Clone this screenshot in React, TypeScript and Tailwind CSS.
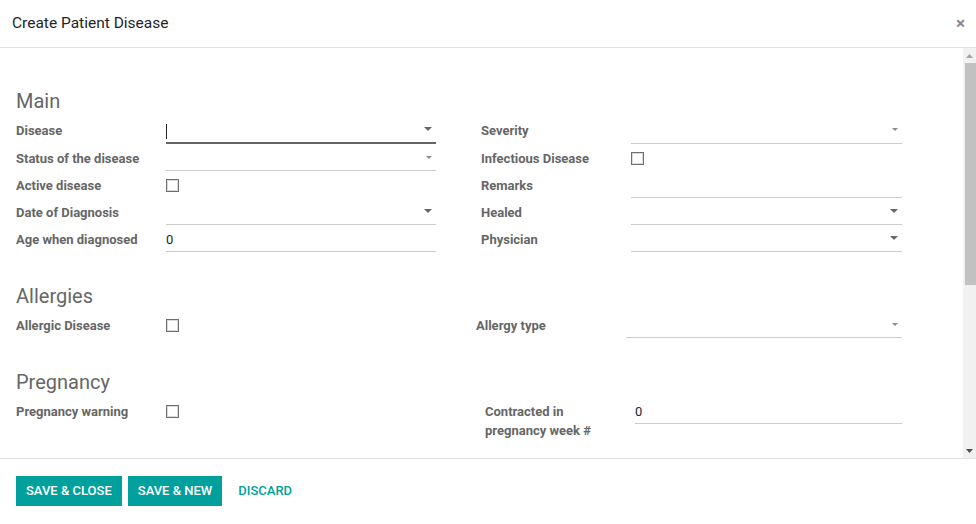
import type { FC, ReactNode } from "react";

const Caret: FC<{ big?: boolean }> = ({ big }) =>
  big ? (
    <svg width="8" height="4" viewBox="0 0 8 4" className="shrink-0">
      <path d="M0 0h8L4 4z" fill="#666666" />
    </svg>
  ) : (
    <svg width="6" height="3" viewBox="0 0 6 3" className="shrink-0">
      <path d="M0 0h6L3 3z" fill="#8a8a8a" />
    </svg>
  );

const Checkbox: FC = () => (
  <div className="h-[27px] flex items-center pt-[1px]">
    <span className="block w-[13px] h-[13px] border border-[#6f6f6f] bg-white shadow-[inset_0_0_0_1px_#d6dbe0]" />
  </div>
);

type FieldProps = {
  w: string;
  value?: string;
  caret?: "big" | "small";
  focused?: boolean;
  tall?: boolean;
};

const Field: FC<FieldProps> = ({ w, value, caret, focused, tall }) => (
  <div
    className={`${w} flex items-center justify-between pr-[4px] ${
      focused
        ? "h-[28px] border-b-2 border-[#666666]"
        : `${tall ? "h-[28px]" : "h-[27px]"} border-b border-[#cccccc]`
    }`}
  >
    <span className="text-[13px] text-[#212529] pt-[3px]">
      {focused ? <span className="inline-block w-px h-[15px] bg-[#222] align-middle" /> : value}
    </span>
    {caret && <Caret big={caret === "big"} />}
  </div>
);

const Row: FC<{ label: ReactNode; children: ReactNode }> = ({ label, children }) => (
  <div className="flex items-start">
    <div className="w-[150px] shrink-0 min-h-[27px] pt-[2px] flex items-center text-[13px] font-bold text-[#666666] leading-[19px]">
      {label}
    </div>
    {children}
  </div>
);

const Heading: FC<{ children: ReactNode; className?: string }> = ({ children, className }) => (
  <h2 className={`text-[20px] leading-[26px] text-[#666666] font-normal ${className ?? ""}`}>{children}</h2>
);

export default function App() {
  return (
    <div
      className="w-[976px] h-[524px] bg-white flex flex-col overflow-hidden"
      style={{ fontFamily: "Roboto, 'Liberation Sans', sans-serif" }}
    >
      {/* header */}
      <div className="h-[48px] shrink-0 border-b border-[#dee2e6] flex items-center justify-between pl-[12px] pr-[11px]">
        <h1 className="text-[15.5px] text-[#212529] font-normal">Create Patient Disease</h1>
        <span className="text-[#8a8a8a] text-[17px] font-bold leading-none">×</span>
      </div>

      {/* body */}
      <div className="flex-1 flex min-h-0">
        <div className="flex-1 overflow-hidden pl-[16px] pt-[40px]">
          <Heading>Main</Heading>
          <div className="mt-[2px] flex">
            <div className="w-[420px] flex flex-col">
              <Row label="Disease">
                <Field w="w-[270px]" caret="big" focused />
              </Row>
              <Row label="Status of the disease">
                <Field w="w-[270px]" caret="small" />
              </Row>
              <Row label="Active disease">
                <Checkbox />
              </Row>
              <Row label="Date of Diagnosis">
                <Field w="w-[270px]" caret="big" />
              </Row>
              <Row label="Age when diagnosed">
                <Field w="w-[270px]" value="0" />
              </Row>
            </div>
            <div className="ml-[45px] w-[421px] flex flex-col">
              <Row label="Severity">
                <Field w="w-[271px]" caret="small" tall />
              </Row>
              <Row label="Infectious Disease">
                <Checkbox />
              </Row>
              <Row label="Remarks">
                <Field w="w-[271px]" />
              </Row>
              <Row label="Healed">
                <Field w="w-[271px]" caret="big" />
              </Row>
              <Row label="Physician">
                <Field w="w-[271px]" caret="big" />
              </Row>
            </div>
          </div>

          <Heading className="mt-[31px]">Allergies</Heading>
          <div className="mt-[2px] flex">
            <div className="w-[420px]">
              <Row label="Allergic Disease">
                <Checkbox />
              </Row>
            </div>
            <div className="ml-[40px]">
              <Row label="Allergy type">
                <Field w="w-[276px]" caret="small" />
              </Row>
            </div>
          </div>

          <Heading className="mt-[31px]">Pregnancy</Heading>
          <div className="mt-[2px] flex">
            <div className="w-[420px]">
              <Row label="Pregnancy warning">
                <Checkbox />
              </Row>
            </div>
            <div className="ml-[49px]">
              <Row
                label={
                  <span className="block pt-[3px]">
                    Contracted in
                    <br />
                    pregnancy week #
                  </span>
                }
              >
                <Field w="w-[267px]" value="0" />
              </Row>
            </div>
          </div>
        </div>

        {/* scrollbar */}
        <div className="w-[13px] shrink-0 bg-[#f1f1f1] flex flex-col items-center">
          <div className="h-[15px] flex items-center justify-center">
            <svg width="7" height="4" viewBox="0 0 7 4">
              <path d="M3.5 0L7 4H0z" fill="#a3a3a3" />
            </svg>
          </div>
          <div className="w-[11px] ml-[2px] h-[222px] bg-[#c1c1c1]" />
          <div className="flex-1" />
          <div className="h-[15px] flex items-center justify-center">
            <svg width="7" height="4" viewBox="0 0 7 4">
              <path d="M0 0h7L3.5 4z" fill="#505050" />
            </svg>
          </div>
        </div>
      </div>

      {/* footer */}
      <div className="h-[66px] shrink-0 border-t border-[#dee2e6] flex items-start pt-[17px] pl-[16px] gap-[6px]">
        <button className="h-[30px] px-[10px] bg-[#00a09d] text-white text-[13px] font-medium uppercase">
          Save &amp; Close
        </button>
        <button className="h-[30px] px-[10px] bg-[#00a09d] text-white text-[13px] font-medium uppercase">
          Save &amp; New
        </button>
        <button className="h-[30px] px-[10px] text-[#00a09d] text-[13px] font-medium uppercase">
          Discard
        </button>
      </div>
    </div>
  );
}
